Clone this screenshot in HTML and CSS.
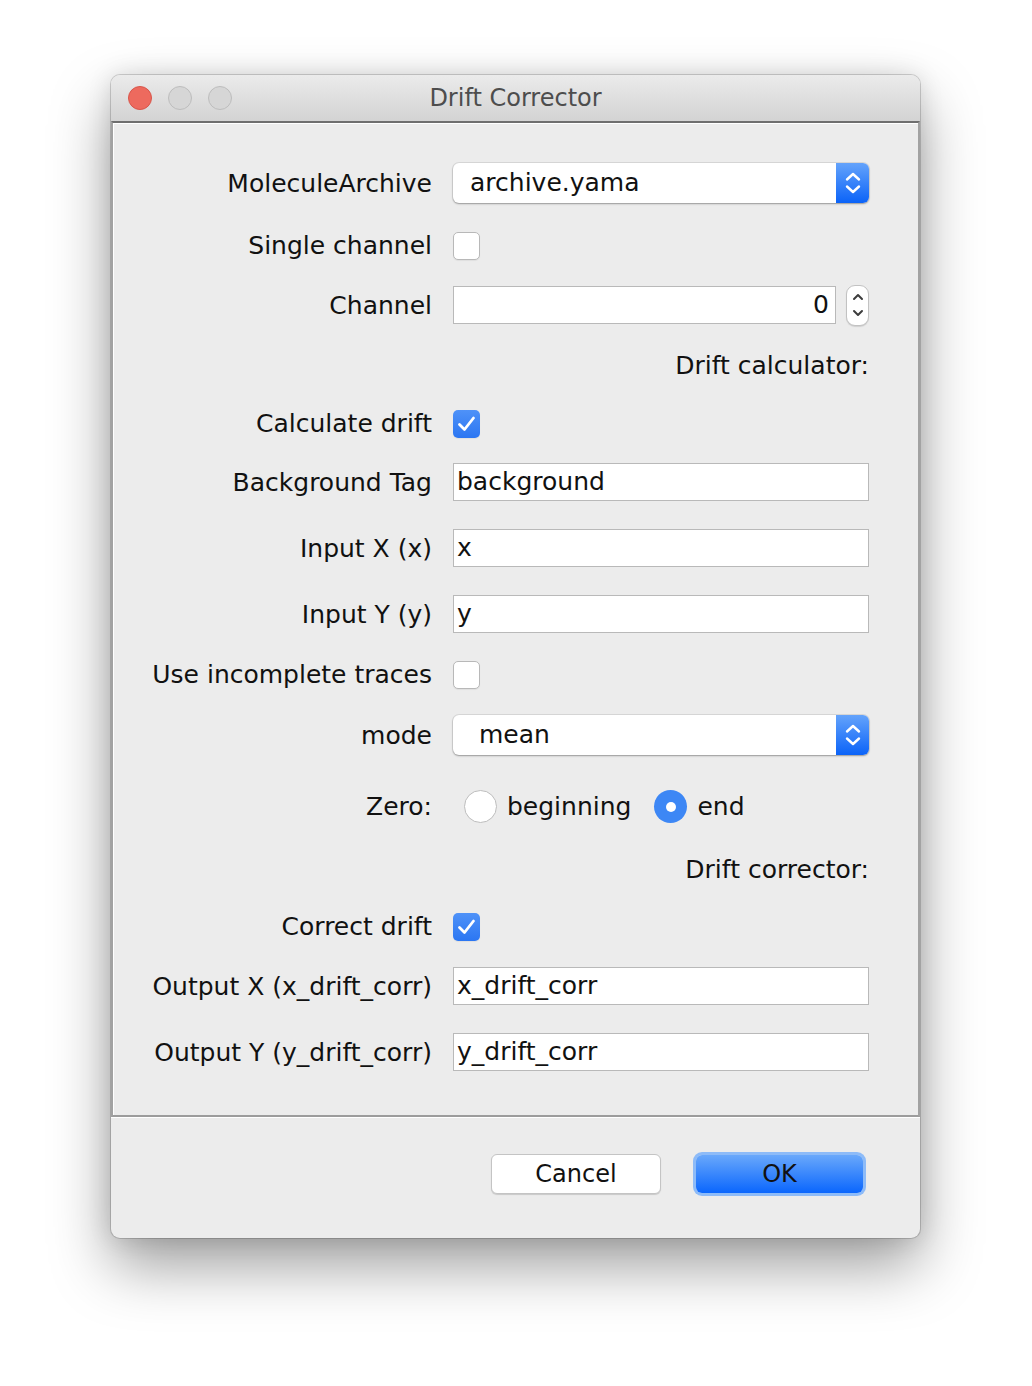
FILE: index.html
```html
<!DOCTYPE html>
<html>
<head>
<meta charset="utf-8">
<title>Drift Corrector</title>
<link rel="stylesheet" href="styles.css">
</head>
<body>
<div class="window">
  <div class="titlebar">
    <div class="lights">
      <span class="light light-close"></span>
      <span class="light"></span>
      <span class="light"></span>
    </div>
    <div class="title">Drift Corrector</div>
    <div></div>
  </div>
  <div class="panel">
    <div class="row r-combo1">
      <label class="lbl">MoleculeArchive</label>
      <div class="combo"><span class="combo-text">archive.yama</span><span class="combo-btn"><svg width="16" height="24" viewBox="0 0 16 24"><path d="M2 8.5 L8 3 L14 8.5 M2 15.5 L8 21 L14 15.5" fill="none" stroke="#fff" stroke-width="2.4" stroke-linecap="round" stroke-linejoin="round"/></svg></span></div>
    </div>
    <div class="row r-check1">
      <label class="lbl">Single channel</label>
      <div><span class="check"></span></div>
    </div>
    <div class="row r-spin">
      <label class="lbl">Channel</label>
      <div class="spin-wrap">
        <div class="field field-num">0</div>
        <div class="spinner"><svg width="12" height="30" viewBox="0 0 12 30"><path d="M2 9 L6 5 L10 9 M2 21 L6 25 L10 21" fill="none" stroke="#3c3c3c" stroke-width="2" stroke-linecap="round" stroke-linejoin="round"/></svg></div>
      </div>
    </div>
    <div class="row section r-sec1">Drift calculator:</div>
    <div class="row r-check2">
      <label class="lbl">Calculate drift</label>
      <div><span class="check checked"><svg width="27" height="28" viewBox="0 0 27 28"><path d="M6.5 14.5 L11.5 19.5 L20.5 8" fill="none" stroke="#fff" stroke-width="2.8" stroke-linecap="round" stroke-linejoin="round"/></svg></span></div>
    </div>
    <div class="row r-field1">
      <label class="lbl">Background Tag</label>
      <div class="field">background</div>
    </div>
    <div class="row r-field">
      <label class="lbl">Input X (x)</label>
      <div class="field">x</div>
    </div>
    <div class="row r-field">
      <label class="lbl">Input Y (y)</label>
      <div class="field">y</div>
    </div>
    <div class="row r-check3">
      <label class="lbl">Use incomplete traces</label>
      <div><span class="check"></span></div>
    </div>
    <div class="row r-combo2">
      <label class="lbl">mode</label>
      <div class="combo"><span class="combo-text combo-text-mode">mean</span><span class="combo-btn"><svg width="16" height="24" viewBox="0 0 16 24"><path d="M2 8.5 L8 3 L14 8.5 M2 15.5 L8 21 L14 15.5" fill="none" stroke="#fff" stroke-width="2.4" stroke-linecap="round" stroke-linejoin="round"/></svg></span></div>
    </div>
    <div class="row r-radio">
      <label class="lbl">Zero:</label>
      <div class="radios">
        <span class="radio"></span><span class="radio-text">beginning</span>
        <span class="radio selected"><span class="dot"></span></span><span class="radio-text">end</span>
      </div>
    </div>
    <div class="row section r-sec2">Drift corrector:</div>
    <div class="row r-check4">
      <label class="lbl">Correct drift</label>
      <div><span class="check checked"><svg width="27" height="28" viewBox="0 0 27 28"><path d="M6.5 14.5 L11.5 19.5 L20.5 8" fill="none" stroke="#fff" stroke-width="2.8" stroke-linecap="round" stroke-linejoin="round"/></svg></span></div>
    </div>
    <div class="row r-field2">
      <label class="lbl">Output X (x_drift_corr)</label>
      <div class="field">x_drift_corr</div>
    </div>
    <div class="row r-field3">
      <label class="lbl">Output Y (y_drift_corr)</label>
      <div class="field">y_drift_corr</div>
    </div>
  </div>
  <div class="buttons">
    <button class="btn btn-cancel">Cancel</button>
    <button class="btn btn-ok">OK</button>
  </div>
</div>
</body>
</html>
```
FILE: styles.css
```css
html, body {
  margin: 0;
  padding: 0;
  background: #ffffff;
}
body {
  font-family: "DejaVu Sans", "Liberation Sans", sans-serif;
  color: #111;
  padding: 75px 0 0 111px;
  height: 1386px;
  box-sizing: border-box;
}
.window {
  width: 809px;
  height: 1163px;
  background: #ececec;
  border-radius: 9px;
  overflow: hidden;
  box-shadow: 0 0 0 1px rgba(0,0,0,0.16), 0 28px 60px rgba(0,0,0,0.38), 0 0 24px rgba(0,0,0,0.12);
  display: flex;
  flex-direction: column;
}
.titlebar {
  height: 46px;
  flex: none;
  background: linear-gradient(#ebebeb, #d3d3d3);
  display: grid;
  grid-template-columns: 1fr auto 1fr;
  align-items: center;
}
.lights {
  display: flex;
  gap: 16px;
  padding-left: 17px;
}
.light {
  width: 22px;
  height: 22px;
  border-radius: 50%;
  background: #d6d6d6;
  border: 1px solid #bdbdbd;
}
.light-close {
  background: #ed6a5e;
  border-color: #d8564b;
}
.title {
  font-size: 24px;
  color: #4d4d4d;
}
.panel {
  flex: none;
  height: 996px;
  box-sizing: border-box;
  border-top: 2px solid #6e6e6e;
  border-left: 2px solid #a2a2a2;
  border-right: 2px solid #a2a2a2;
  border-bottom: 2px solid #9c9c9c;
  box-shadow: inset 1px 1px 0 #fff, 0 1px 0 #fff;
  padding-top: 40px;
  display: flex;
  flex-direction: column;
}
.row {
  display: grid;
  grid-template-columns: 319px 416px;
  column-gap: 21px;
  align-items: center;
  font-size: 25px;
}
.lbl {
  text-align: right;
  white-space: nowrap;
}
.section {
  display: block;
  width: 756px;
  text-align: right;
  height: 30px;
  line-height: 30px;
}
.r-combo1 { height: 40px; }
.r-check1 { height: 28px; margin-top: 28px; }
.r-spin { height: 42px; margin-top: 25px; }
.r-sec1 { margin-top: 25px; }
.r-check2 { height: 28px; margin-top: 28px; }
.r-field1 { height: 38px; margin-top: 26px; }
.r-field { height: 38px; margin-top: 28px; }
.r-check3 { height: 28px; margin-top: 27px; }
.r-combo2 { height: 40px; margin-top: 27px; }
.r-radio { height: 33px; margin-top: 35px; }
.r-sec2 { margin-top: 32px; }
.r-check4 { height: 28px; margin-top: 27px; }
.r-field2 { height: 38px; margin-top: 27px; }
.r-field3 { height: 38px; margin-top: 28px; }

.combo {
  height: 40px;
  display: flex;
  border-radius: 6px;
  background: #fff;
  box-shadow: 0 0 0 1px rgba(0,0,0,0.08), 0 1px 2px rgba(0,0,0,0.3);
  overflow: hidden;
}
.combo-text {
  flex: 1;
  line-height: 40px;
  padding-left: 17px;
}
.combo-text-mode {
  padding-left: 26px;
}
.combo-btn {
  width: 33px;
  background: linear-gradient(#64a3fb, #0b63f8);
  display: flex;
  align-items: center;
  justify-content: center;
}
.field {
  height: 38px;
  box-sizing: border-box;
  background: #fff;
  border: 1px solid #b9b9b9;
  line-height: 36px;
  padding-left: 3px;
  white-space: nowrap;
}
.spin-wrap {
  display: flex;
  align-items: center;
  gap: 10px;
}
.field-num {
  width: 383px;
  text-align: right;
  padding: 0 6px 0 0;
}
.spinner {
  width: 23px;
  height: 41px;
  box-sizing: border-box;
  border: 1px solid #c2c2c2;
  border-radius: 9px;
  background: #fff;
  box-shadow: 0 1px 1px rgba(0,0,0,0.12);
  display: flex;
  align-items: center;
  justify-content: center;
}
.check {
  display: block;
  width: 27px;
  height: 28px;
  box-sizing: border-box;
  border-radius: 5px;
  background: #fff;
  border: 1px solid #b8b8b8;
  box-shadow: 0 1px 1px rgba(0,0,0,0.06);
}
.check.checked {
  border: none;
  background: linear-gradient(#4f92f8, #2b76f2);
}
.check svg {
  display: block;
}
.radios {
  display: flex;
  align-items: center;
  padding-left: 11px;
}
.radio {
  width: 33px;
  height: 33px;
  box-sizing: border-box;
  border-radius: 50%;
  background: #fff;
  border: 1px solid #bdbdbd;
  display: flex;
  align-items: center;
  justify-content: center;
  flex: none;
}
.radio.selected {
  border: none;
  background: #3d87f5;
}
.dot {
  width: 10px;
  height: 10px;
  border-radius: 50%;
  background: #fff;
}
.radio-text {
  margin-left: 10px;
  margin-right: 23px;
}
.buttons {
  flex: 1;
  display: flex;
  justify-content: flex-end;
  align-items: center;
  gap: 35px;
  padding-right: 54px;
  padding-bottom: 8px;
}
.btn {
  font-family: "DejaVu Sans", "Liberation Sans", sans-serif;
  font-size: 24px;
  color: #111;
  border-radius: 6px;
  padding: 0;
  cursor: default;
}
.btn-cancel {
  width: 170px;
  height: 40px;
  background: #fff;
  border: 1px solid #c4c4c4;
  box-shadow: 0 1px 1px rgba(0,0,0,0.15);
}
.btn-ok {
  width: 167px;
  height: 38px;
  margin-right: 3px;
  border: none;
  background: linear-gradient(#69a8fb, #0a66fd);
  box-shadow: 0 0 0 3px #8dbbf8;
}
```
